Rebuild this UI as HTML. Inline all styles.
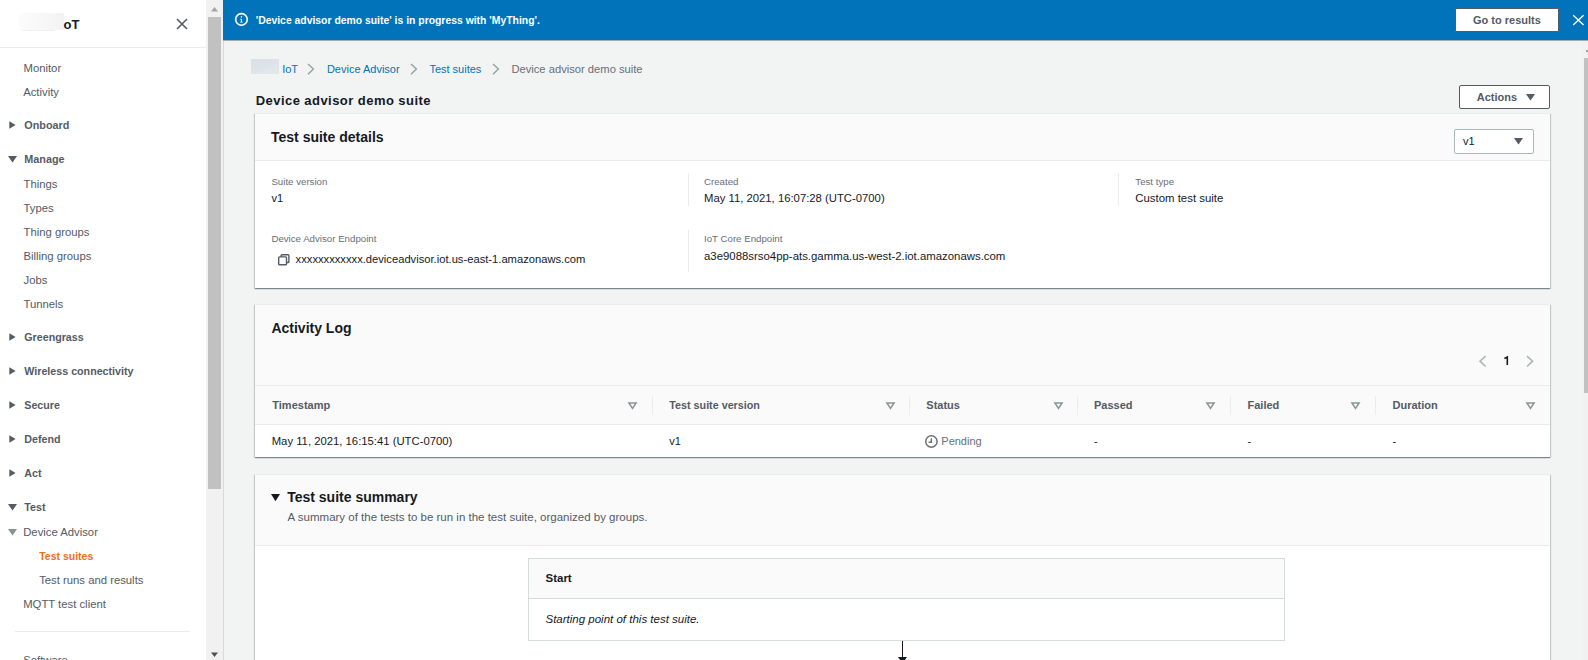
<!DOCTYPE html>
<html><head><meta charset="utf-8"><style>
html,body{margin:0;padding:0}
body{width:1588px;height:660px;overflow:hidden;position:relative;background:#f2f3f3;font-family:"Liberation Sans",sans-serif}
.t{position:absolute;white-space:nowrap}
.r{position:absolute}
svg.r{display:block;overflow:visible}
</style></head><body>
<div class="r" style="left:0px;top:0px;width:206px;height:660px;background:#fff"></div>
<div class="r" style="left:19px;top:13px;width:45px;height:17px;background:linear-gradient(90deg,#fcfcfc,#f3f3f3)"></div>
<div class="r" style="left:22px;top:30px;width:33px;height:1px;background:#f0f0f0"></div>
<div class="t" style="left:63.5px;top:18px;font-size:13px;line-height:13px;font-weight:700;color:#16191f;font-style:normal;">oT</div>
<svg class="r" style="left:176px;top:18px" width="12" height="12" viewBox="0 0 12 12"><path d="M1 1L11 11M11 1L1 11" stroke="#545b64" stroke-width="1.6" fill="none"/></svg>
<div class="r" style="left:0px;top:47px;width:206px;height:1px;background:#eaeded"></div>
<div class="t" style="left:23.5px;top:63px;font-size:11.3px;line-height:11.3px;font-weight:400;color:#545b64;font-style:normal;">Monitor</div>
<div class="t" style="left:23.2px;top:87px;font-size:11.3px;line-height:11.3px;font-weight:400;color:#545b64;font-style:normal;">Activity</div>
<svg class="r" style="left:9px;top:121px" width="7" height="8" viewBox="0 0 7 8"><path d="M0.3 0.2L6.6 4L0.3 7.8Z" fill="#545b64"/></svg>
<div class="t" style="left:24.3px;top:120px;font-size:10.8px;line-height:10.8px;font-weight:700;color:#545b64;font-style:normal;">Onboard</div>
<svg class="r" style="left:8px;top:156px" width="9" height="6.5" viewBox="0 0 9 6.5"><path d="M0 0L9 0L4.5 6.5Z" fill="#545b64"/></svg>
<div class="t" style="left:24.3px;top:154px;font-size:10.8px;line-height:10.8px;font-weight:700;color:#545b64;font-style:normal;">Manage</div>
<div class="t" style="left:23.5px;top:179px;font-size:11.3px;line-height:11.3px;font-weight:400;color:#545b64;font-style:normal;">Things</div>
<div class="t" style="left:23.5px;top:203px;font-size:11.3px;line-height:11.3px;font-weight:400;color:#545b64;font-style:normal;">Types</div>
<div class="t" style="left:23.5px;top:227px;font-size:11.3px;line-height:11.3px;font-weight:400;color:#545b64;font-style:normal;">Thing groups</div>
<div class="t" style="left:23.5px;top:251px;font-size:11.3px;line-height:11.3px;font-weight:400;color:#545b64;font-style:normal;">Billing groups</div>
<div class="t" style="left:23.5px;top:275px;font-size:11.3px;line-height:11.3px;font-weight:400;color:#545b64;font-style:normal;">Jobs</div>
<div class="t" style="left:23.5px;top:299px;font-size:11.3px;line-height:11.3px;font-weight:400;color:#545b64;font-style:normal;">Tunnels</div>
<svg class="r" style="left:9px;top:333px" width="7" height="8" viewBox="0 0 7 8"><path d="M0.3 0.2L6.6 4L0.3 7.8Z" fill="#545b64"/></svg>
<div class="t" style="left:24.3px;top:332px;font-size:10.7px;line-height:10.7px;font-weight:700;color:#545b64;font-style:normal;">Greengrass</div>
<svg class="r" style="left:9px;top:367px" width="7" height="8" viewBox="0 0 7 8"><path d="M0.3 0.2L6.6 4L0.3 7.8Z" fill="#545b64"/></svg>
<div class="t" style="left:24.3px;top:366px;font-size:10.7px;line-height:10.7px;font-weight:700;color:#545b64;font-style:normal;">Wireless connectivity</div>
<svg class="r" style="left:9px;top:401px" width="7" height="8" viewBox="0 0 7 8"><path d="M0.3 0.2L6.6 4L0.3 7.8Z" fill="#545b64"/></svg>
<div class="t" style="left:24.3px;top:400px;font-size:10.7px;line-height:10.7px;font-weight:700;color:#545b64;font-style:normal;">Secure</div>
<svg class="r" style="left:9px;top:435px" width="7" height="8" viewBox="0 0 7 8"><path d="M0.3 0.2L6.6 4L0.3 7.8Z" fill="#545b64"/></svg>
<div class="t" style="left:24.3px;top:434px;font-size:10.7px;line-height:10.7px;font-weight:700;color:#545b64;font-style:normal;">Defend</div>
<svg class="r" style="left:9px;top:469px" width="7" height="8" viewBox="0 0 7 8"><path d="M0.3 0.2L6.6 4L0.3 7.8Z" fill="#545b64"/></svg>
<div class="t" style="left:24.3px;top:468px;font-size:10.7px;line-height:10.7px;font-weight:700;color:#545b64;font-style:normal;">Act</div>
<svg class="r" style="left:8px;top:504px" width="9" height="6.5" viewBox="0 0 9 6.5"><path d="M0 0L9 0L4.5 6.5Z" fill="#545b64"/></svg>
<div class="t" style="left:24.3px;top:502px;font-size:10.7px;line-height:10.7px;font-weight:700;color:#545b64;font-style:normal;">Test</div>
<svg class="r" style="left:7.5px;top:529px" width="9" height="6.5" viewBox="0 0 9 6.5"><path d="M0 0L9 0L4.5 6.5Z" fill="#879596"/></svg>
<div class="t" style="left:23.2px;top:527px;font-size:11.3px;line-height:11.3px;font-weight:400;color:#545b64;font-style:normal;">Device Advisor</div>
<div class="t" style="left:39.2px;top:551px;font-size:10.5px;line-height:10.5px;font-weight:700;color:#ec6f1c;font-style:normal;">Test suites</div>
<div class="t" style="left:39.2px;top:575px;font-size:11.3px;line-height:11.3px;font-weight:400;color:#545b64;font-style:normal;">Test runs and results</div>
<div class="t" style="left:23.2px;top:599px;font-size:11.3px;line-height:11.3px;font-weight:400;color:#545b64;font-style:normal;">MQTT test client</div>
<div class="r" style="left:15px;top:631px;width:175px;height:1px;background:#eaeded"></div>
<div class="t" style="left:23.2px;top:655px;font-size:11.3px;line-height:11.3px;font-weight:400;color:#545b64;font-style:normal;">Software</div>
<div class="r" style="left:206px;top:0px;width:17px;height:660px;background:#f1f1f1"></div>
<div class="r" style="left:208px;top:17px;width:13px;height:472px;background:#c1c1c1"></div>
<svg class="r" style="left:210px;top:6px" width="9" height="6" viewBox="0 0 9 6"><path d="M1 5.5L8 5.5L4.5 1Z" fill="#a3a3a3"/></svg>
<svg class="r" style="left:210px;top:652px" width="9" height="6" viewBox="0 0 9 6"><path d="M1 0.5L8 0.5L4.5 5Z" fill="#505050"/></svg>
<div class="r" style="left:223px;top:0px;width:1px;height:660px;background:#d5dbdb"></div>
<div class="r" style="left:223px;top:0px;width:1365px;height:40px;background:#0073bb"></div>
<div class="r" style="left:223px;top:40px;width:1365px;height:1px;background:#a8aaa8"></div>
<svg class="r" style="left:234px;top:12px" width="15" height="15" viewBox="0 0 15 15"><circle cx="7.45" cy="7.45" r="5.8" stroke="#fff" stroke-width="1.6" fill="none"/><rect x="6.8" y="4.2" width="1.3" height="1.3" fill="#fff"/><path d="M6.3 6.8H7.9V9.8H8.7V10.6H6.1V9.8H6.9V7.6H6.3Z" fill="#fff"/></svg>
<div class="t" style="left:255.7px;top:16px;font-size:10.4px;line-height:10.4px;font-weight:700;color:#fff;font-style:normal;">&#39;Device advisor demo suite&#39; is in progress with &#39;MyThing&#39;.</div>
<div class="r" style="left:1455px;top:8px;width:104px;height:24px;background:#fff;border:1px solid #545b64;border-radius:1px;box-sizing:border-box"></div>
<div class="t" style="left:1473px;top:15px;font-size:11px;line-height:11px;font-weight:700;color:#545b64;font-style:normal;">Go to results</div>
<svg class="r" style="left:1572px;top:14px" width="13" height="12" viewBox="0 0 13 12"><path d="M1.2 1.2L11.6 11M11.6 1.2L1.2 11" stroke="#fff" stroke-width="1.3" fill="none"/></svg>
<div class="r" style="left:1582px;top:41px;width:6px;height:619px;background:#f1f1f1"></div>
<div class="r" style="left:1584px;top:58px;width:4px;height:335px;background:#c1c1c1"></div>
<div class="r" style="left:1586px;top:50px;width:2px;height:2px;background:#a3a3a3"></div>
<div class="r" style="left:251px;top:59px;width:28px;height:15px;background:linear-gradient(160deg,#d8e0e6,#e3e8eb)"></div>
<div class="t" style="left:282.2px;top:64px;font-size:11px;line-height:11px;font-weight:400;color:#0073bb;font-style:normal;">IoT</div>
<svg class="r" style="left:306.5px;top:62.5px" width="8" height="12" viewBox="0 0 8 12"><path d="M1 0.9L6.4 6.1L1 11.2" stroke="#95a2a3" stroke-width="1.4" fill="none"/></svg>
<div class="t" style="left:326.9px;top:64px;font-size:11px;line-height:11px;font-weight:400;color:#0073bb;font-style:normal;">Device Advisor</div>
<svg class="r" style="left:409.5px;top:62.5px" width="8" height="12" viewBox="0 0 8 12"><path d="M1 0.9L6.4 6.1L1 11.2" stroke="#95a2a3" stroke-width="1.4" fill="none"/></svg>
<div class="t" style="left:429.4px;top:64px;font-size:11px;line-height:11px;font-weight:400;color:#0073bb;font-style:normal;">Test suites</div>
<svg class="r" style="left:491.5px;top:62.5px" width="8" height="12" viewBox="0 0 8 12"><path d="M1 0.9L6.4 6.1L1 11.2" stroke="#95a2a3" stroke-width="1.4" fill="none"/></svg>
<div class="t" style="left:511.4px;top:64px;font-size:11.2px;line-height:11.2px;font-weight:400;color:#687078;font-style:normal;">Device advisor demo suite</div>
<div class="t" style="left:255.7px;top:94px;font-size:13px;line-height:13px;font-weight:700;color:#16191f;font-style:normal;letter-spacing:0.45px;">Device advisor demo suite</div>
<div class="r" style="left:1459px;top:85px;width:91px;height:24px;background:#fff;border:1px solid #545b64;border-radius:2px;box-sizing:border-box"></div>
<div class="t" style="left:1476.7px;top:92px;font-size:11px;line-height:11px;font-weight:700;color:#545b64;font-style:normal;">Actions</div>
<svg class="r" style="left:1526px;top:94.3px" width="9" height="6.5" viewBox="0 0 9 6.5"><path d="M0 0L9 0L4.5 6.5Z" fill="#545b64"/></svg>
<div class="r" style="left:255px;top:113px;width:1295px;height:175px;background:#fff;border-top:1px solid #eaeded;box-sizing:border-box;box-shadow:0 1px 1px 0 rgba(0,28,36,.3),1px 1px 1px 0 rgba(0,28,36,.15),-1px 1px 1px 0 rgba(0,28,36,.15);"></div>
<div class="r" style="left:255px;top:114px;width:1295px;height:46px;background:#fafafa"></div>
<div class="r" style="left:255px;top:160px;width:1295px;height:1px;background:#eaeded"></div>
<div class="t" style="left:271px;top:130px;font-size:14px;line-height:14px;font-weight:700;color:#16191f;font-style:normal;">Test suite details</div>
<div class="r" style="left:1454px;top:129px;width:80px;height:25px;background:#fff;border:1px solid #aab7b8;border-radius:2px;box-sizing:border-box"></div>
<div class="t" style="left:1463px;top:136px;font-size:11px;line-height:11px;font-weight:400;color:#16191f;font-style:normal;">v1</div>
<svg class="r" style="left:1514px;top:138px" width="9" height="6.5" viewBox="0 0 9 6.5"><path d="M0 0L9 0L4.5 6.5Z" fill="#545b64"/></svg>
<div class="t" style="left:271.4px;top:177px;font-size:9.7px;line-height:9.7px;font-weight:400;color:#687078;font-style:normal;">Suite version</div>
<div class="t" style="left:271.4px;top:193px;font-size:11px;line-height:11px;font-weight:400;color:#16191f;font-style:normal;">v1</div>
<div class="t" style="left:271.4px;top:234px;font-size:9.7px;line-height:9.7px;font-weight:400;color:#687078;font-style:normal;">Device Advisor Endpoint</div>
<svg class="r" style="left:277px;top:253px" width="13" height="13" viewBox="0 0 13 13"><rect x="4.1" y="1.7" width="7.8" height="7.8" rx="0.8" stroke="#545b64" stroke-width="1.4" fill="none"/><rect x="1.7" y="3.9" width="7.8" height="7.8" rx="0.8" stroke="#545b64" stroke-width="1.4" fill="#fff"/></svg>
<div class="t" style="left:295.6px;top:254px;font-size:11.2px;line-height:11.2px;font-weight:400;color:#16191f;font-style:normal;">xxxxxxxxxxxx.deviceadvisor.iot.us-east-1.amazonaws.com</div>
<div class="r" style="left:688px;top:173px;width:1px;height:33px;background:#eaeded"></div>
<div class="r" style="left:688px;top:230px;width:1px;height:42px;background:#eaeded"></div>
<div class="t" style="left:704px;top:177px;font-size:9.7px;line-height:9.7px;font-weight:400;color:#687078;font-style:normal;">Created</div>
<div class="t" style="left:704px;top:193px;font-size:11.3px;line-height:11.3px;font-weight:400;color:#16191f;font-style:normal;">May 11, 2021, 16:07:28 (UTC-0700)</div>
<div class="t" style="left:704px;top:234px;font-size:9.7px;line-height:9.7px;font-weight:400;color:#687078;font-style:normal;">IoT Core Endpoint</div>
<div class="t" style="left:704px;top:251px;font-size:11.4px;line-height:11.4px;font-weight:400;color:#16191f;font-style:normal;">a3e9088srso4pp-ats.gamma.us-west-2.iot.amazonaws.com</div>
<div class="r" style="left:1118px;top:173px;width:1px;height:33px;background:#eaeded"></div>
<div class="t" style="left:1135.3px;top:177px;font-size:9.7px;line-height:9.7px;font-weight:400;color:#687078;font-style:normal;">Test type</div>
<div class="t" style="left:1135.3px;top:193px;font-size:11.4px;line-height:11.4px;font-weight:400;color:#16191f;font-style:normal;">Custom test suite</div>
<div class="r" style="left:255px;top:304px;width:1295px;height:153px;background:#fff;border-top:1px solid #eaeded;box-sizing:border-box;box-shadow:0 1px 1px 0 rgba(0,28,36,.3),1px 1px 1px 0 rgba(0,28,36,.15),-1px 1px 1px 0 rgba(0,28,36,.15);"></div>
<div class="r" style="left:255px;top:305px;width:1295px;height:119px;background:#fafafa"></div>
<div class="r" style="left:255px;top:385px;width:1295px;height:1px;background:#eaeded"></div>
<div class="r" style="left:255px;top:424px;width:1295px;height:1px;background:#eaeded"></div>
<div class="t" style="left:271.4px;top:321px;font-size:14px;line-height:14px;font-weight:700;color:#16191f;font-style:normal;">Activity Log</div>
<svg class="r" style="left:1478.5px;top:354.5px" width="8" height="13" viewBox="0 0 8 13"><path d="M6.6 1.1L1 6.2L6.6 11.5" stroke="#aab7b8" stroke-width="1.6" fill="none"/></svg>
<svg class="r" style="left:1503px;top:356px" width="7" height="10" viewBox="0 0 7 10"><path d="M1.4 2.5L4.3 1.1V9" stroke="#16191f" stroke-width="1.6" fill="none"/></svg>
<svg class="r" style="left:1526px;top:354.5px" width="8" height="13" viewBox="0 0 8 13"><path d="M1 1.1L6.6 6.2L1 11.5" stroke="#aab7b8" stroke-width="1.6" fill="none"/></svg>
<div class="t" style="left:272.3px;top:400px;font-size:11px;line-height:11px;font-weight:700;color:#545b64;font-style:normal;">Timestamp</div>
<svg class="r" style="left:628.3px;top:401.8px" width="9" height="8" viewBox="0 0 9 8"><path d="M0.9 0.9H8.1L4.5 6.4Z" stroke="#879596" stroke-width="1.5" fill="none" stroke-linejoin="miter"/></svg>
<div class="t" style="left:669.3px;top:400px;font-size:10.75px;line-height:10.75px;font-weight:700;color:#545b64;font-style:normal;">Test suite version</div>
<svg class="r" style="left:885.5px;top:401.8px" width="9" height="8" viewBox="0 0 9 8"><path d="M0.9 0.9H8.1L4.5 6.4Z" stroke="#879596" stroke-width="1.5" fill="none" stroke-linejoin="miter"/></svg>
<div class="t" style="left:926.3px;top:400px;font-size:11px;line-height:11px;font-weight:700;color:#545b64;font-style:normal;">Status</div>
<svg class="r" style="left:1053.5px;top:401.8px" width="9" height="8" viewBox="0 0 9 8"><path d="M0.9 0.9H8.1L4.5 6.4Z" stroke="#879596" stroke-width="1.5" fill="none" stroke-linejoin="miter"/></svg>
<div class="t" style="left:1094px;top:400px;font-size:11px;line-height:11px;font-weight:700;color:#545b64;font-style:normal;">Passed</div>
<svg class="r" style="left:1206.4px;top:401.8px" width="9" height="8" viewBox="0 0 9 8"><path d="M0.9 0.9H8.1L4.5 6.4Z" stroke="#879596" stroke-width="1.5" fill="none" stroke-linejoin="miter"/></svg>
<div class="t" style="left:1247.5px;top:400px;font-size:11px;line-height:11px;font-weight:700;color:#545b64;font-style:normal;">Failed</div>
<svg class="r" style="left:1351px;top:401.8px" width="9" height="8" viewBox="0 0 9 8"><path d="M0.9 0.9H8.1L4.5 6.4Z" stroke="#879596" stroke-width="1.5" fill="none" stroke-linejoin="miter"/></svg>
<div class="t" style="left:1392.5px;top:400px;font-size:11px;line-height:11px;font-weight:700;color:#545b64;font-style:normal;">Duration</div>
<svg class="r" style="left:1526px;top:401.8px" width="9" height="8" viewBox="0 0 9 8"><path d="M0.9 0.9H8.1L4.5 6.4Z" stroke="#879596" stroke-width="1.5" fill="none" stroke-linejoin="miter"/></svg>
<div class="r" style="left:652px;top:396px;width:1px;height:19px;background:#eaeded"></div>
<div class="r" style="left:909px;top:396px;width:1px;height:19px;background:#eaeded"></div>
<div class="r" style="left:1077px;top:396px;width:1px;height:19px;background:#eaeded"></div>
<div class="r" style="left:1230px;top:396px;width:1px;height:19px;background:#eaeded"></div>
<div class="r" style="left:1375px;top:396px;width:1px;height:19px;background:#eaeded"></div>
<div class="t" style="left:271.7px;top:436px;font-size:11.3px;line-height:11.3px;font-weight:400;color:#16191f;font-style:normal;">May 11, 2021, 16:15:41 (UTC-0700)</div>
<div class="t" style="left:669.3px;top:436px;font-size:11px;line-height:11px;font-weight:400;color:#16191f;font-style:normal;">v1</div>
<svg class="r" style="left:924px;top:434px" width="15" height="15" viewBox="0 0 15 15"><circle cx="7.4" cy="7.5" r="5.7" stroke="#687078" stroke-width="1.5" fill="none"/><path d="M7.3 4.2V8.3H4.6" stroke="#687078" stroke-width="1.4" fill="none"/></svg>
<div class="t" style="left:941.3px;top:436px;font-size:11px;line-height:11px;font-weight:400;color:#687078;font-style:normal;">Pending</div>
<div class="t" style="left:1094px;top:436px;font-size:11px;line-height:11px;font-weight:400;color:#16191f;font-style:normal;">-</div>
<div class="t" style="left:1247.5px;top:436px;font-size:11px;line-height:11px;font-weight:400;color:#16191f;font-style:normal;">-</div>
<div class="t" style="left:1392.5px;top:436px;font-size:11px;line-height:11px;font-weight:400;color:#16191f;font-style:normal;">-</div>
<div class="r" style="left:255px;top:474px;width:1295px;height:200px;background:#fff;border-top:1px solid #eaeded;box-sizing:border-box;box-shadow:0 1px 1px 0 rgba(0,28,36,.3),1px 1px 1px 0 rgba(0,28,36,.15),-1px 1px 1px 0 rgba(0,28,36,.15);"></div>
<div class="r" style="left:255px;top:475px;width:1295px;height:70px;background:#fafafa"></div>
<div class="r" style="left:255px;top:545px;width:1295px;height:1px;background:#eaeded"></div>
<svg class="r" style="left:271px;top:494px" width="9" height="7.3" viewBox="0 0 9 7.3"><path d="M0 0L9 0L4.5 7.3Z" fill="#16191f"/></svg>
<div class="t" style="left:287.2px;top:490px;font-size:14px;line-height:14px;font-weight:700;color:#16191f;font-style:normal;">Test suite summary</div>
<div class="t" style="left:287.6px;top:512px;font-size:11.5px;line-height:11.5px;font-weight:400;color:#545b64;font-style:normal;">A summary of the tests to be run in the test suite, organized by groups.</div>
<div class="r" style="left:528px;top:558px;width:757px;height:83px;background:#fff;border:1px solid #d5dbdb;box-sizing:border-box"></div>
<div class="r" style="left:529px;top:559px;width:755px;height:39px;background:#fafafa"></div>
<div class="r" style="left:529px;top:598px;width:755px;height:1px;background:#d5dbdb"></div>
<div class="t" style="left:545.5px;top:573px;font-size:11.5px;line-height:11.5px;font-weight:700;color:#16191f;font-style:normal;">Start</div>
<div class="t" style="left:545.5px;top:614px;font-size:11.5px;line-height:11.5px;font-weight:400;color:#16191f;font-style:italic;">Starting point of this test suite.</div>
<div class="r" style="left:902px;top:641px;width:1px;height:17px;background:#16191f"></div>
<svg class="r" style="left:898px;top:657px" width="9" height="7" viewBox="0 0 9 7"><path d="M0 0H9L4.5 6.5Z" fill="#16191f"/></svg>
</body></html>
